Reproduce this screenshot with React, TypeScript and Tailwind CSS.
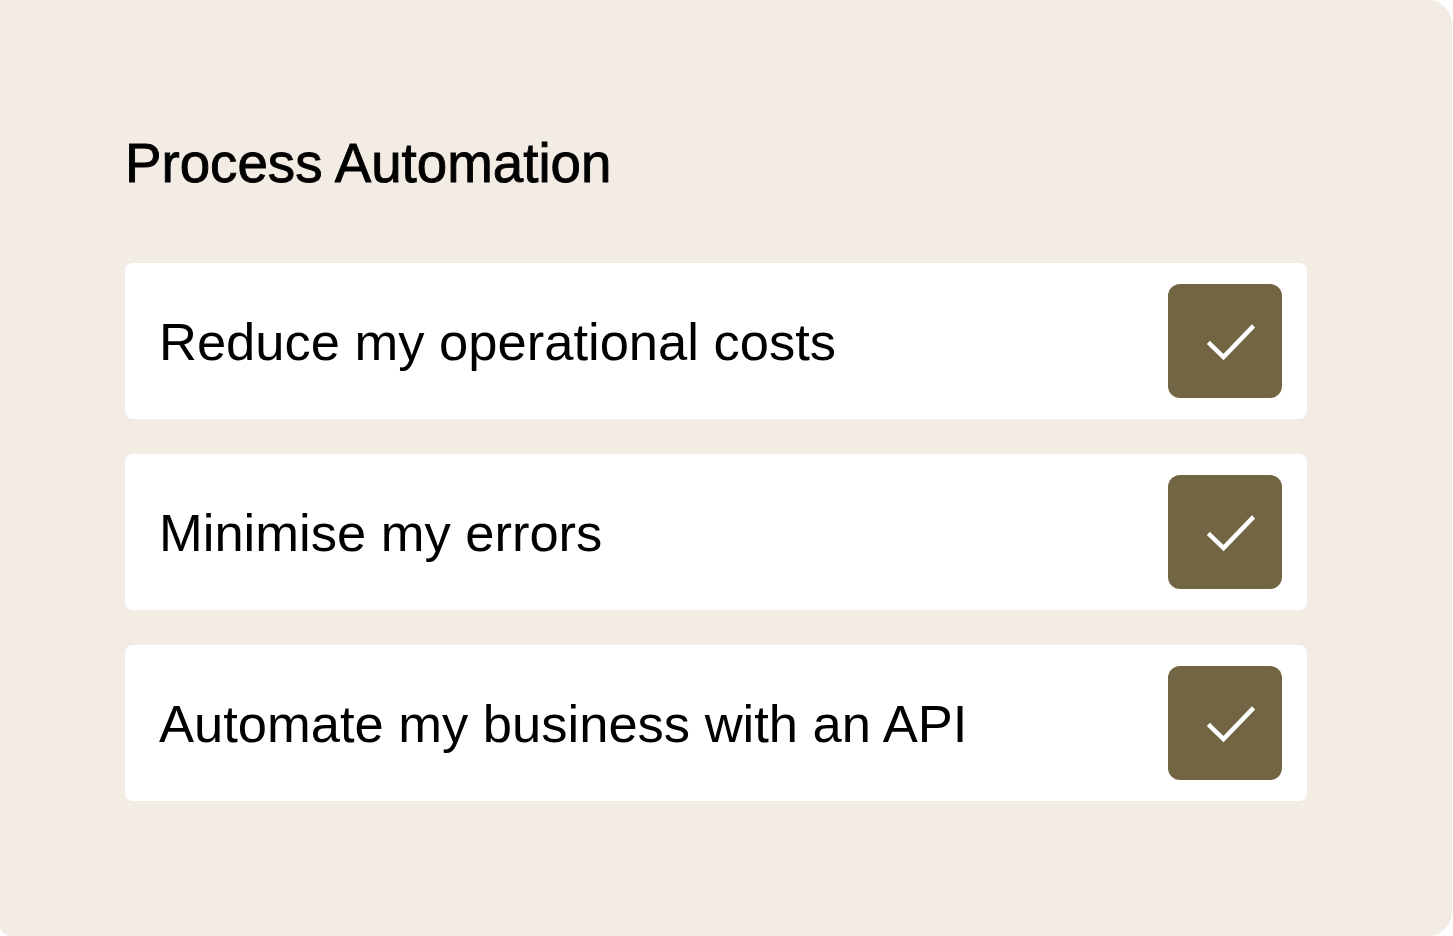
import React from "react";

const items = [
  "Reduce my operational costs",
  "Minimise my errors",
  "Automate my business with an API",
];

function Check() {
  return (
    <div className="w-[114px] h-[114px] rounded-[12px] bg-[#716543] shrink-0">
      <svg width="114" height="114" viewBox="0 0 114 114" fill="none">
        <path d="M42 60 L55.5 73 L84 43.5" stroke="#ffffff" strokeWidth="4.5" strokeLinecap="square" strokeLinejoin="miter" />
      </svg>
    </div>
  );
}

export default function App() {
  return (
    <div className="w-[1453px] h-[936px] bg-white" style={{ fontFamily: '"Liberation Sans", Arial, sans-serif' }}>
      <div className="w-[1452px] h-[936px] bg-[#f2ece5] rounded-tr-[24px] rounded-br-[24px] rounded-bl-[10px] pl-[125px] pt-[136px]">
        <h1 className="h-[54px] text-[54.7px] leading-[54px] text-black font-normal [-webkit-text-stroke:0.9px_black]">
          Process Automation
        </h1>
        <div className="mt-[73px] w-[1182px] flex flex-col gap-[35px]">
          {items.map((t) => (
            <div key={t} className="h-[156px] bg-white rounded-[8px] flex items-center justify-between pl-[34px] pr-[25px]">
              <span className="text-[52.5px] leading-none text-black pt-[3px]">{t}</span>
              <Check />
            </div>
          ))}
        </div>
      </div>
    </div>
  );
}
